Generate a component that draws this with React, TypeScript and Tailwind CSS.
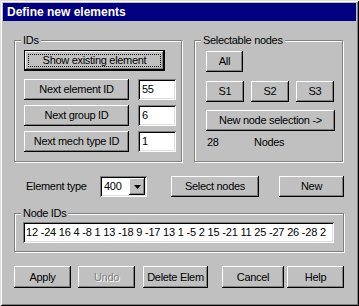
import React from 'react'

const font = { fontFamily: '"Liberation Sans", Arial, sans-serif' }

const bevel =
  'flex items-center justify-center bg-[#c0c0c0] shadow-[inset_-1px_-1px_#000,inset_1px_1px_#fff,inset_-2px_-2px_#808080] text-[11px] leading-none tracking-[-0.3px] text-black'

const sunken =
  'bg-white shadow-[inset_1px_1px_#808080,inset_-1px_-1px_#fff,inset_2px_2px_#000,inset_-2px_-2px_#dfdfdf]'

function Button({
  children,
  className = '',
  disabled = false,
}: {
  children: React.ReactNode
  className?: string
  disabled?: boolean
}) {
  return (
    <div className={`${bevel} ${className}`}>
      {disabled ? (
        <span className="text-[#808080] [text-shadow:1px_1px_0_#fff]">{children}</span>
      ) : (
        children
      )}
    </div>
  )
}

function Group({
  label,
  className = '',
  children,
}: {
  label: string
  className?: string
  children: React.ReactNode
}) {
  return (
    <div className={`relative border border-[#808080] shadow-[inset_1px_1px_#fff,1px_1px_#fff] ${className}`}>
      <span className="absolute -top-[7px] left-[6px] px-[2px] bg-[#c0c0c0] text-[11px] leading-[13px] tracking-[-0.3px]">
        {label}
      </span>
      {children}
    </div>
  )
}

function Field({ value, className = '' }: { value: string; className?: string }) {
  return (
    <div className={`${sunken} flex items-center pl-[4px] text-[11px] leading-none tracking-[-0.3px] overflow-hidden whitespace-nowrap ${className}`}>
      {value}
    </div>
  )
}

export default function App() {
  return (
    <div
      style={font}
      className="w-[359px] h-[306px] bg-[#c0c0c0] text-black text-[11px] shadow-[inset_1px_1px_#dfdfdf,inset_-1px_-1px_#000,inset_2px_2px_#fff,inset_-2px_-2px_#808080] overflow-hidden"
    >
      {/* title bar */}
      <div className="mx-[3px] mt-[3px] h-[18px] bg-[#000080] text-white font-bold text-[12px] leading-none pl-[4px] flex items-center">
        Define new elements
      </div>

      {/* ids + selectable nodes */}
      <div className="flex gap-[12px] pl-[14px] mt-[19px]">
        <Group label="IDs" className="w-[168px] h-[122px] pl-[9px] pt-[9px]">
          <div className="w-[141px] h-[21px] border border-black">
            <div className={`${bevel} w-full h-full p-[3px]`}>
              <div className="w-full h-full border border-dotted border-black flex items-center justify-center">
                Show existing element
              </div>
            </div>
          </div>
          <div className="flex flex-col gap-[5px] mt-[8px]">
            <div className="flex gap-[9px]">
              <Button className="w-[105px] h-[21px]">Next element ID</Button>
              <Field value="55" className="w-[38px] h-[21px]" />
            </div>
            <div className="flex gap-[9px]">
              <Button className="w-[105px] h-[21px]">Next group ID</Button>
              <Field value="6" className="w-[38px] h-[21px]" />
            </div>
            <div className="flex gap-[9px]">
              <Button className="w-[105px] h-[21px]">Next mech type ID</Button>
              <Field value="1" className="w-[38px] h-[21px]" />
            </div>
          </div>
        </Group>

        <Group label="Selectable nodes" className="w-[149px] h-[122px] pl-[11px] pt-[10px]">
          <Button className="w-[37px] h-[21px]">All</Button>
          <div className="flex gap-[7px] mt-[9px]">
            <Button className="w-[38px] h-[21px]">S1</Button>
            <Button className="w-[38px] h-[21px]">S2</Button>
            <Button className="w-[38px] h-[21px]">S3</Button>
          </div>
          <Button className="w-[129px] h-[21px] mt-[8px]">New node selection -&gt;</Button>
          <div className="flex mt-[6px] pl-[1px] leading-none tracking-[-0.3px]">
            <span className="w-[47px]">28</span>
            <span>Nodes</span>
          </div>
        </Group>
      </div>

      {/* element type row */}
      <div className="flex items-center h-[21px] mt-[14px] pl-[26px]">
        <span className="w-[74px] tracking-[-0.3px]">Element type</span>
        <div className={`${sunken} w-[47px] h-[21px] flex items-center justify-between p-[2px] pl-[4px]`}>
          <span className="tracking-[-0.3px]">400</span>
          <div className={`${bevel} w-[16px] h-full`}>
            <svg width="7" height="4" viewBox="0 0 7 4">
              <path d="M0 0h7L3.5 4z" fill="#000" />
            </svg>
          </div>
        </div>
        <Button className="w-[88px] h-[21px] ml-[24px]">Select nodes</Button>
        <Button className="w-[65px] h-[21px] ml-[20px]">New</Button>
      </div>

      {/* node ids */}
      <div className="pl-[14px] mt-[16px]">
        <Group label="Node IDs" className="w-[330px] h-[39px] pl-[8px] pt-[8px]">
          <Field
            value="12 -24 16 4 -8 1 13 -18 9 -17 13 1 -5 2 15 -21 11 25 -27 26 -28 2"
            className="w-[311px] h-[21px] !pl-[3px] !tracking-[-0.2px]"
          />
        </Group>
      </div>

      {/* bottom buttons */}
      <div className="flex pl-[14px] mt-[14px]">
        <Button className="w-[57px] h-[22px]">Apply</Button>
        <Button className="w-[57px] h-[22px] ml-[7px]" disabled>
          Undo
        </Button>
        <Button className="w-[65px] h-[22px] ml-[8px]">Delete Elem</Button>
        <Button className="w-[62px] h-[22px] ml-[14px]">Cancel</Button>
        <Button className="w-[57px] h-[22px] ml-[3px]">Help</Button>
      </div>
    </div>
  )
}
